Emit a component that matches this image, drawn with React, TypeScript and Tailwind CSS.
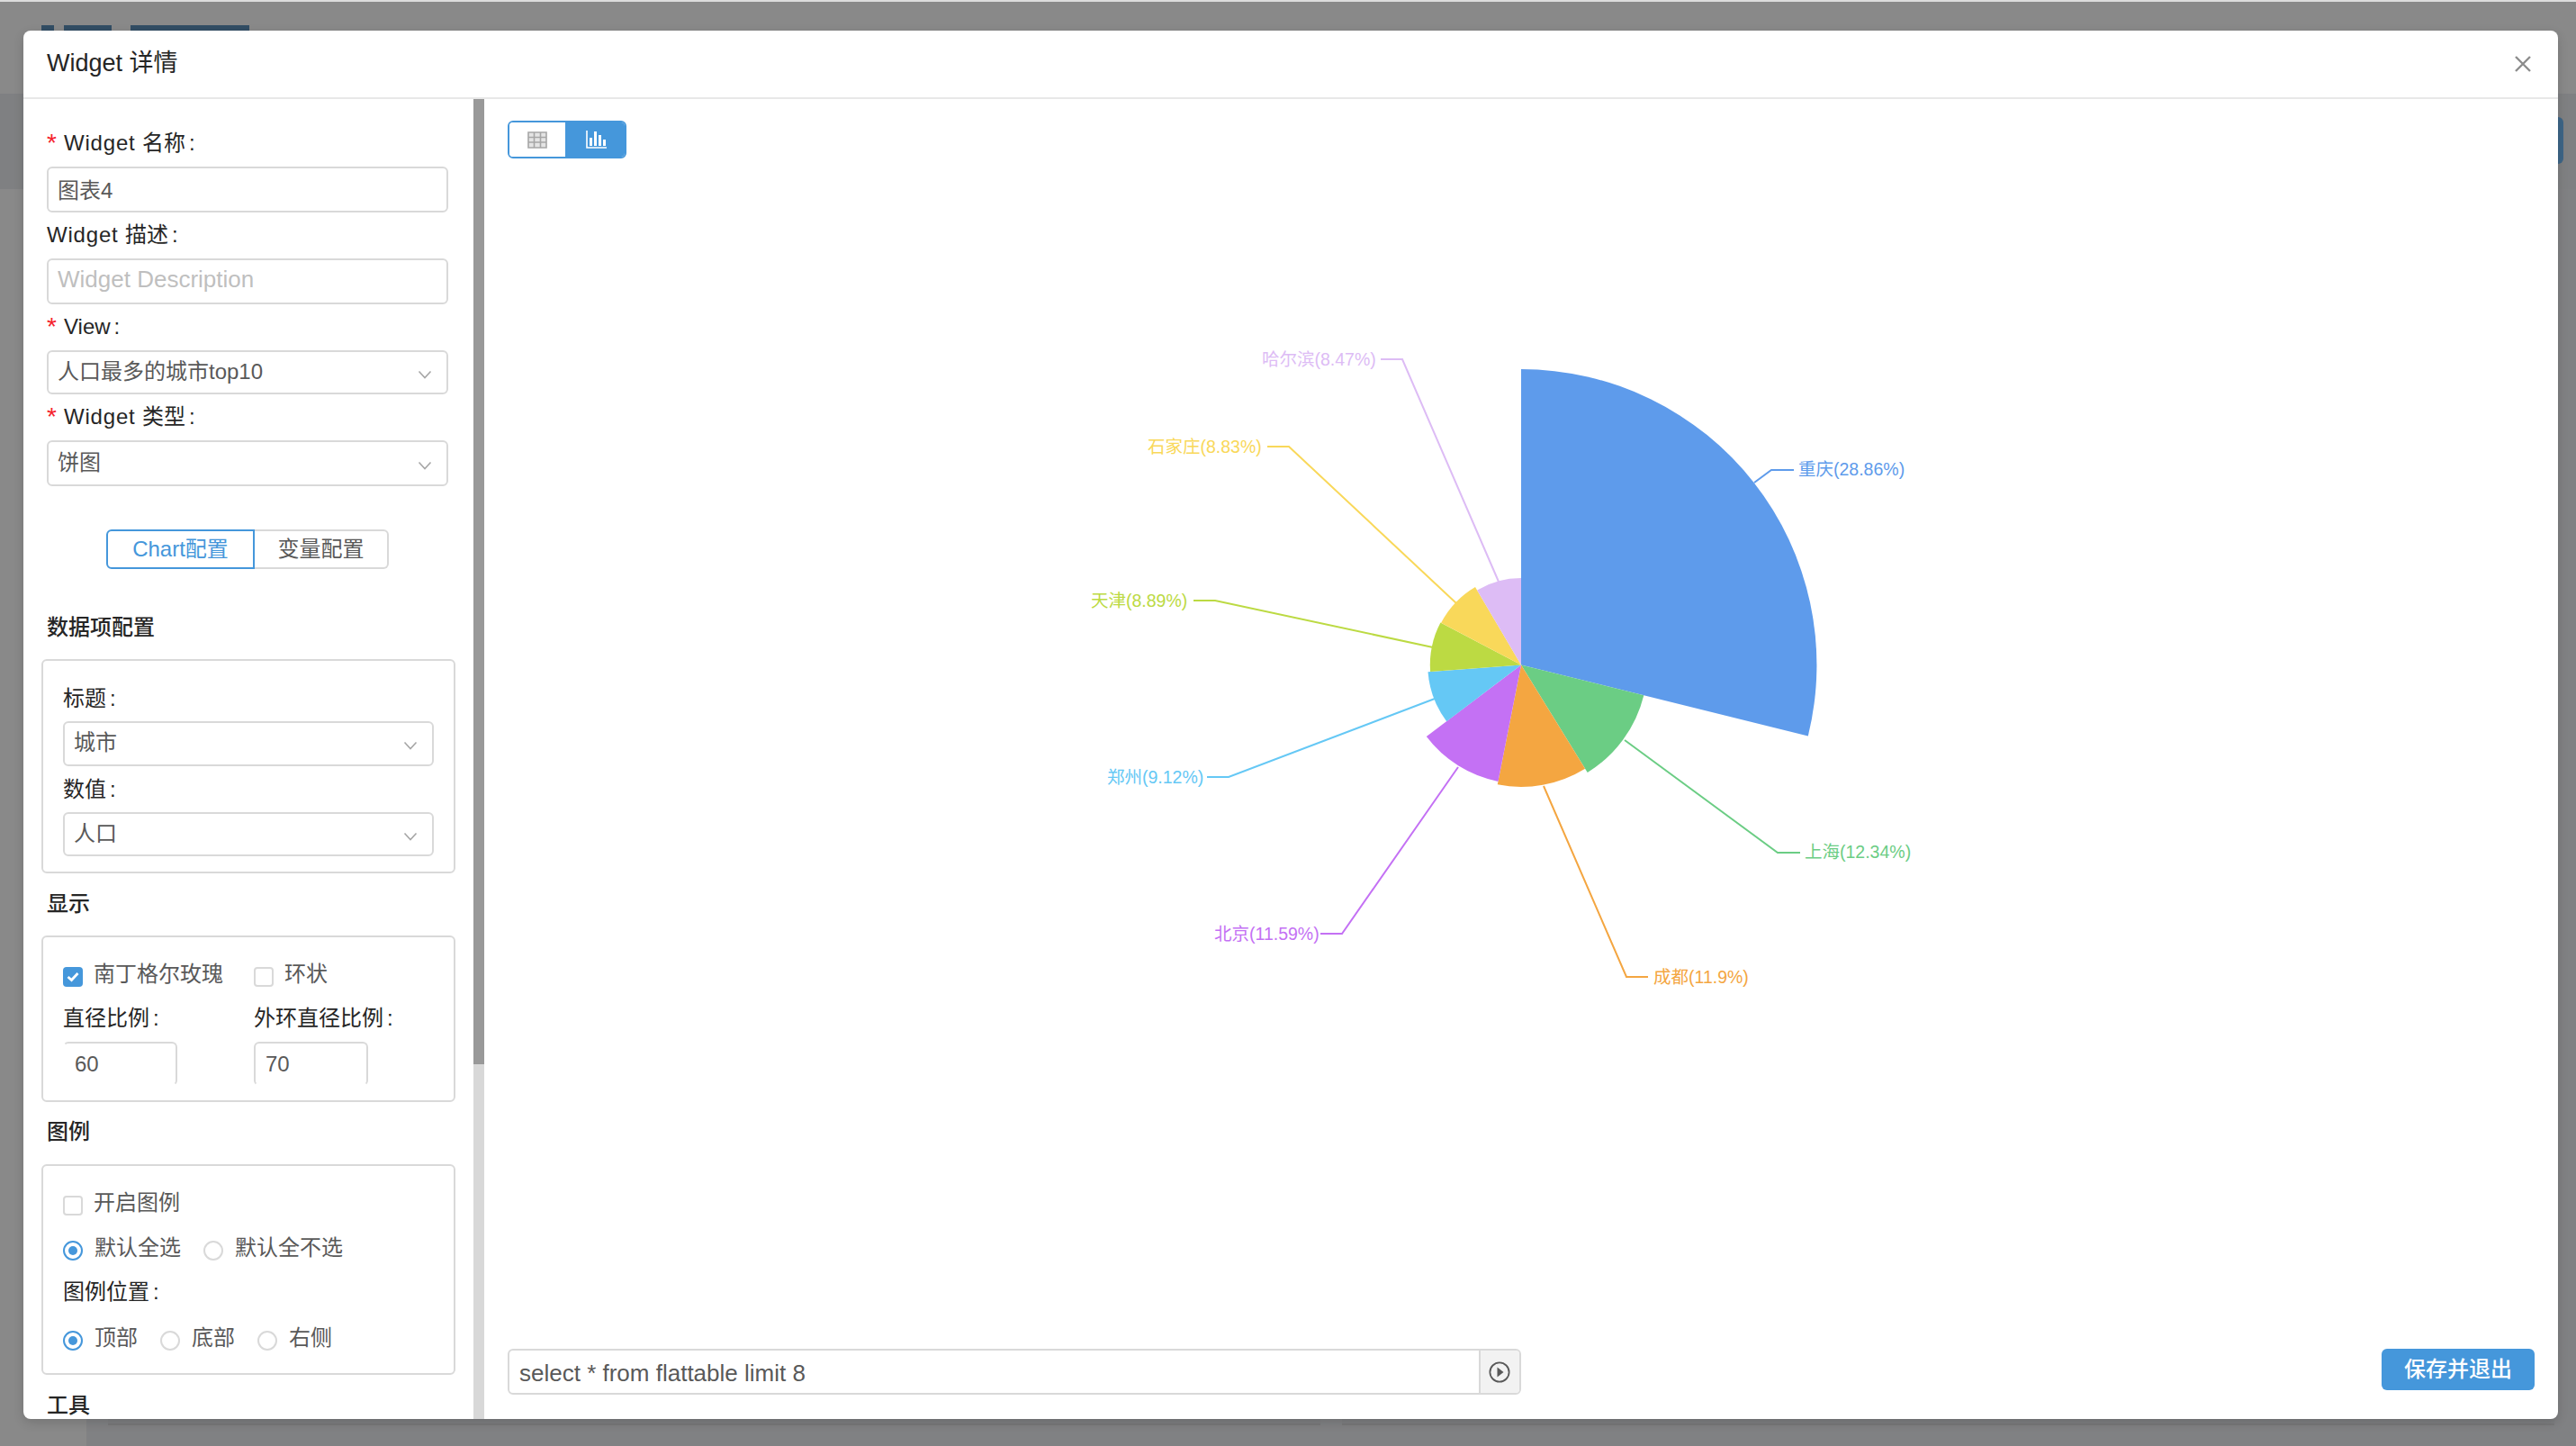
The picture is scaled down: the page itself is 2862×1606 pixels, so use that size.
const slices = [
  { label: "重庆(28.86%)", pct: 28.86, color: "#5e9beb", line: "1949,536 1968,522 1993,522", tx: 1998, ty: 521 },
  { label: "上海(12.34%)", pct: 12.34, color: "#6bcd84", line: "1805,822 1975,947 2000,947", tx: 2005, ty: 946 },
  { label: "成都(11.9%)", pct: 11.9, color: "#f4a641", line: "1715,873 1807,1085 1831,1085", tx: 1837, ty: 1085 },
  { label: "北京(11.59%)", pct: 11.59, color: "#c471f4", line: "1620,852 1491,1037 1467,1037", tx: 1349, ty: 1037 },
  { label: "郑州(9.12%)", pct: 9.12, color: "#65c8f5", line: "1594,776 1365,863 1341,863", tx: 1230, ty: 863 },
  { label: "天津(8.89%)", pct: 8.89, color: "#bcda43", line: "1592,719 1350,667 1326,667", tx: 1212, ty: 667 },
  { label: "石家庄(8.83%)", pct: 8.83, color: "#f9d85a", line: "1618,670 1432,496 1408,496", tx: 1275, ty: 496 },
  { label: "哈尔滨(8.47%)", pct: 8.47, color: "#ddbcf5", line: "1665,646 1558,399 1534,399", tx: 1402, ty: 399 },
];

const cx = 1690;
const cy = 738.5;

function slicePath(start: number, pct: number) {
  const r = pct * 11.38;
  const a0 = (start / 100) * 2 * Math.PI;
  const a1 = ((start + pct) / 100) * 2 * Math.PI;
  const x0 = cx + r * Math.sin(a0);
  const y0 = cy - r * Math.cos(a0);
  const x1 = cx + r * Math.sin(a1);
  const y1 = cy - r * Math.cos(a1);
  const large = pct > 50 ? 1 : 0;
  return `M${cx} ${cy}L${x0} ${y0}A${r} ${r} 0 ${large} 1 ${x1} ${y1}Z`;
}

function RoseChart() {
  let acc = 0;
  return (
    <svg className="min-h-0 w-full flex-1" viewBox="538 176 2304 1322">
      {slices.map((s) => {
        const d = slicePath(acc, s.pct);
        acc += s.pct;
        return <path key={s.label} d={d} fill={s.color} />;
      })}
      {slices.map((s) => (
        <g key={s.label}>
          <polyline points={s.line} fill="none" stroke={s.color} strokeWidth="2" />
          <text x={s.tx} y={s.ty + 7} fill={s.color} fontSize="19.5">
            {s.label}
          </text>
        </g>
      ))}
    </svg>
  );
}

function Chevron() {
  return (
    <svg width="16" height="10" viewBox="0 0 16 10" className="mt-[4px] shrink-0">
      <path d="M1.5 1.5L8 8.5L14.5 1.5" fill="none" stroke="#a6a6a6" strokeWidth="1.6" />
    </svg>
  );
}

function Label({ children, required }: { children: React.ReactNode; required?: boolean }) {
  return (
    <div className="flex h-[36px] items-center text-[24px] whitespace-pre text-[#262626]">
      {required && <span className="w-[19px] text-[28px] leading-[28px] text-[#f5222d]">*</span>}
      {children}
      <span className="ml-[4px]">:</span>
    </div>
  );
}

function WidgetWord() {
  return <span className="tracking-[0.8px]">Widget </span>;
}

function Select({ value, w, h }: { value: string; w: string; h: string }) {
  return (
    <div className={`flex items-center justify-between rounded-[6px] border-2 border-[#d9d9d9] pr-[16px] pl-[10px] text-[24px] text-[#595959] ${w} ${h}`}>
      <span className="-mt-[2px]">{value}</span>
      <Chevron />
    </div>
  );
}

function Check({ checked, label }: { checked?: boolean; label: string }) {
  return (
    <div className="flex h-[36px] items-center gap-[12px]">
      {checked ? (
        <span className="mt-[5px] flex h-[22px] w-[22px] items-center justify-center rounded-[4px] bg-[#4597db]">
          <svg width="14" height="12" viewBox="0 0 14 12">
            <path d="M1.5 6L5.5 9.5L12.5 2" fill="none" stroke="#fff" strokeWidth="2.8" />
          </svg>
        </span>
      ) : (
        <span className="mt-[5px] h-[22px] w-[22px] rounded-[4px] border-2 border-[#d9d9d9] bg-white" />
      )}
      <span className="text-[24px] text-[#595959]">{label}</span>
    </div>
  );
}

function Radio({ checked, label }: { checked?: boolean; label: string }) {
  return (
    <div className="flex h-[36px] items-center gap-[13px]">
      {checked ? (
        <span className="mt-[5px] flex h-[22px] w-[22px] items-center justify-center rounded-full border-2 border-[#4597db]">
          <span className="h-[10px] w-[10px] rounded-full bg-[#4597db]" />
        </span>
      ) : (
        <span className="mt-[5px] h-[22px] w-[22px] rounded-full border-2 border-[#d9d9d9]" />
      )}
      <span className="text-[24px] text-[#595959]">{label}</span>
    </div>
  );
}

function SectionTitle({ children, className }: { children: React.ReactNode; className: string }) {
  return <div className={`flex h-[36px] items-center text-[24px] font-medium text-[#262626] ${className}`}>{children}</div>;
}

function ConfigPanel() {
  const inputClass = "h-[51px] w-[446px] rounded-[6px] border-2 border-[#d9d9d9] px-[10px] pb-[3px] text-[24px] text-[#595959] outline-none placeholder:text-[26px] placeholder:text-[#bfbfbf]";
  const boxClass = "-mx-[6px] rounded-[6px] border-2 border-[#d9d9d9] pl-[22px]";
  return (
    <div className="w-[500px] shrink-0 overflow-hidden px-[26px] pt-[31px]">
      <Label required><WidgetWord />名称</Label>
      <input className={`mt-[8px] ${inputClass}`} defaultValue="图表4" readOnly />
      <div className="mt-[7px]">
        <Label><WidgetWord />描述</Label>
      </div>
      <input className={`mt-[8px] ${inputClass}`} placeholder="Widget Description" readOnly />
      <div className="mt-[7px]">
        <Label required>View</Label>
      </div>
      <div className="mt-[8px]">
        <Select value="人口最多的城市top10" w="w-[446px]" h="h-[49px]" />
      </div>
      <div className="mt-[7px]">
        <Label required><WidgetWord />类型</Label>
      </div>
      <div className="mt-[8px]">
        <Select value="饼图" w="w-[446px]" h="h-[51px]" />
      </div>

      <div className="mt-[48px] flex w-[446px] justify-center text-[24px]">
        <div className="flex h-[44px] w-[165px] items-center justify-center rounded-l-[6px] border-2 border-[#4597db] text-[#4597db]">Chart配置</div>
        <div className="flex h-[44px] w-[149px] items-center justify-center rounded-r-[6px] border-2 border-l-0 border-[#d9d9d9] text-[#595959]">变量配置</div>
      </div>

      <SectionTitle className="mt-[47px]">数据项配置</SectionTitle>
      <div className={`mt-[17px] h-[238px] pt-[24px] ${boxClass}`}>
        <Label>标题</Label>
        <div className="mt-[7px]">
          <Select value="城市" w="w-[412px]" h="h-[50px]" />
        </div>
        <div className="mt-[8px]">
          <Label>数值</Label>
        </div>
        <div className="mt-[7px]">
          <Select value="人口" w="w-[412px]" h="h-[49px]" />
        </div>
      </div>

      <SectionTitle className="mt-[16px]">显示</SectionTitle>
      <div className={`mt-[17px] h-[185px] pt-[23px] ${boxClass}`}>
        <div className="flex">
          <div className="w-[212px]">
            <Check checked label="南丁格尔玫瑰" />
          </div>
          <Check label="环状" />
        </div>
        <div className="mt-[13px] flex">
          <div className="w-[212px]">
            <Label>直径比例</Label>
            <input className="mt-[8px] h-[49px] w-[127px] rounded-[6px] border-2 border-[#d9d9d9] border-b-transparent border-l-transparent px-[11px] text-[24px] text-[#595959] outline-none" defaultValue="60" readOnly />
          </div>
          <div>
            <Label>外环直径比例</Label>
            <input className="mt-[8px] h-[49px] w-[127px] rounded-[6px] border-2 border-[#d9d9d9] border-b-transparent px-[11px] text-[24px] text-[#595959] outline-none" defaultValue="70" readOnly />
          </div>
        </div>
      </div>

      <SectionTitle className="mt-[15px]">图例</SectionTitle>
      <div className={`mt-[18px] h-[234px] pt-[23px] ${boxClass}`}>
        <Check label="开启图例" />
        <div className="mt-[14px] flex gap-[25px]">
          <Radio checked label="默认全选" />
          <Radio label="默认全不选" />
        </div>
        <div className="mt-[13px]">
          <Label>图例位置</Label>
        </div>
        <div className="mt-[15px] flex gap-[25px]">
          <Radio checked label="顶部" />
          <Radio label="底部" />
          <Radio label="右侧" />
        </div>
      </div>

      <SectionTitle className="mt-[16px]">工具</SectionTitle>
    </div>
  );
}

function Toolbar() {
  return (
    <div className="ml-[26px] flex h-[42px] w-[132px] overflow-hidden rounded-[6px] border-2 border-[#4597db]">
      <div className="flex w-[62px] items-center justify-center bg-white">
        <svg width="22" height="19" viewBox="0 0 22 19">
          <path d="M1 1H21V18H1ZM1 6.5H21M1 12H21M7.5 1V18M14.5 1V18" fill="#e4e4e4" stroke="#a6a6a6" strokeWidth="1.6" />
        </svg>
      </div>
      <div className="flex flex-1 items-center justify-center bg-[#4597db] pl-[2px]">
        <svg width="23" height="20" viewBox="0 0 23 20">
          <path d="M1 0V19H23" fill="none" stroke="#fff" strokeWidth="1.6" />
          <path d="M4 8H7V17H4ZM9 1H12V17H9ZM14 5H17V17H14ZM19 10H22V17H19Z" fill="#fff" />
        </svg>
      </div>
    </div>
  );
}

function SqlBar() {
  return (
    <div className="flex h-[51px] items-start justify-between pr-[26px] pl-[26px]">
      <div className="flex h-[51px] w-[1126px] overflow-hidden rounded-[6px] border-2 border-[#d9d9d9]">
        <input className="min-w-0 flex-1 px-[11px] pt-[3px] text-[26px] text-[#595959] outline-none" defaultValue="select * from flattable limit 8" readOnly />
        <div className="flex w-[45px] items-center justify-center border-l-2 border-[#d9d9d9] bg-[#f2f2f2] pr-[2px]">
          <svg width="24" height="24" viewBox="0 0 24 24">
            <circle cx="12" cy="12" r="10.6" fill="none" stroke="#595959" strokeWidth="1.8" />
            <path d="M9.5 6.5L16.5 12L9.5 17.5Z" fill="#595959" />
          </svg>
        </div>
      </div>
      <button className="h-[46px] w-[170px] rounded-[6px] bg-[#4597db] text-[24px] font-medium text-white">保存并退出</button>
    </div>
  );
}

function PageBehind() {
  return (
    <div className="flex h-full flex-col">
      <div className="h-[2px] bg-[#dcdcdc]" />
      <div className="flex h-[102px] items-start gap-[11px] bg-[#898989] pt-[26px] pl-[46px]">
        <div className="h-[20px] w-[14px] bg-[#324d64]" />
        <div className="h-[20px] w-[53px] bg-[#324d64]" />
        <div className="ml-[10px] h-[20px] w-[132px] bg-[#324d64]" />
      </div>
      <div className="flex h-[106px] justify-end bg-[#7f8082] pt-[26px] pr-[14px]">
        <div className="h-[52px] w-[26px] rounded-r-[6px] bg-[#3d6587]" />
      </div>
      <div className="flex flex-1">
        <div className="w-[96px] bg-[#898989]" />
        <div className="flex flex-1 gap-[24px] bg-[#808183] pr-[24px] pb-[23px] pl-[24px]">
          <div className="flex-1 border-b-2 border-[#787879] bg-[#7d7e80]" />
          <div className="flex-1 border-b-2 border-[#787879] bg-[#7d7e80]" />
        </div>
      </div>
    </div>
  );
}

export default function App() {
  return (
    <div className="relative h-[1606px] w-[2862px] overflow-hidden bg-[#808183] font-['Liberation_Sans','Noto_Sans_CJK_SC',sans-serif]">
      <PageBehind />

      <div className="absolute top-[34px] left-[26px] flex h-[1542px] w-[2816px] flex-col overflow-hidden rounded-[8px] bg-white shadow-[0_4px_12px_rgba(0,0,0,0.15)]">
        <div className="flex h-[76px] shrink-0 items-center justify-between border-b-2 border-[#e8e8e8] pr-[30px] pl-[26px]">
          <span className="-mt-[2px] text-[27px] text-[#262626]">Widget 详情</span>
          <svg width="18" height="18" viewBox="0 0 18 18">
            <path d="M1 1L17 17M17 1L1 17" stroke="#8c8c8c" strokeWidth="2.4" />
          </svg>
        </div>
        <div className="flex min-h-0 flex-1">
          <ConfigPanel />
          <div className="w-[12px] shrink-0 bg-[#d8d8d8]">
            <div className="h-[1072px] bg-[#999999]" />
          </div>
          <div className="flex min-w-0 flex-1 flex-col pt-[24px] pb-[27px]">
            <Toolbar />
            <RoseChart />
            <SqlBar />
          </div>
        </div>
      </div>
    </div>
  );
}
